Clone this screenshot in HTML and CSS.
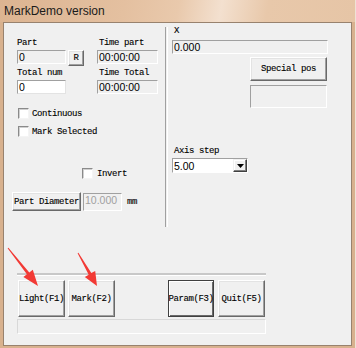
FILE: index.html
```html
<!DOCTYPE html>
<html>
<head>
<meta charset="utf-8">
<link rel="stylesheet" href="styles.css">
</head>
<body>
<div class="window">
  <div class="titlebar"><span class="title">MarkDemo version</span></div>
  <div class="client">
    <div class="top">
      <div class="left">
        <div class="fieldgrid">
          <div class="lbl span2">Part</div>
          <div class="lbl tlbl">Time part</div>
          <div class="edit ro">0</div>
          <div class="btn rbtn">R</div>
          <div class="edit ro time">00:00:00</div>
          <div class="lbl span2">Total num</div>
          <div class="lbl tlbl">Time Total</div>
          <div class="edit">0</div>
          <div></div>
          <div class="edit ro time">00:00:00</div>
        </div>
        <div class="check c1"><span class="box"></span><span class="lbl">Continuous</span></div>
        <div class="check c2"><span class="box"></span><span class="lbl">Mark Selected</span></div>
        <div class="check c3"><span class="box"></span><span class="lbl">Invert</span></div>
        <div class="diam">
          <div class="btn dbtn">Part Diameter</div>
          <div class="edit ro dis">10.000</div>
          <span class="lbl mm">mm</span>
        </div>
      </div>
      <div class="vsep"></div>
      <div class="right">
        <div class="lbl rl">X</div>
        <div class="edit ro xbox">0.000</div>
        <div class="btn spbtn">Special pos</div>
        <div class="static"></div>
        <div class="lbl rl axis">Axis step</div>
        <div class="combo">
          <span class="ctext">5.00</span>
          <span class="dd"><svg width="7" height="4" viewBox="0 0 7 4"><path d="M0 0H7L3.5 4Z" fill="#000"/></svg></span>
        </div>
      </div>
    </div>
    <div class="hsep"></div>
    <div class="btnrow">
      <div class="btn big">Light(F1)</div>
      <div class="btn big mark">Mark(F2)</div>
      <div class="btn big def">Param(F3)</div>
      <div class="btn big quit">Quit(F5)</div>
    </div>
    <div class="status"></div>
  </div>
  <svg class="arrows" width="356" height="348" viewBox="0 0 356 348">
    <polygon points="7.6,248.3 8.4,247.7 29.3,272.5 32.8,269.7 38,286 23.4,277.1 26.9,274.3" fill="#f23a35"/>
    <polygon points="77.6,253.2 78.4,252.8 91.3,273.1 95.2,270.9 97,286 84.8,276.9 88.7,274.7" fill="#f23a35"/>
  </svg>
</div>
</body>
</html>
```

FILE: styles.css
```css
html, body { margin: 0; padding: 0; background: #ffffff; }
.window {
  position: relative;
  width: 356px;
  height: 348px;
  box-sizing: border-box;
  background: #d8b18e;
  border-right: 1px solid #efe2d6;
  overflow: hidden;
}
.titlebar {
  height: 22px;
  display: flex;
  align-items: center;
  padding-left: 4px;
  background: linear-gradient(100deg, #dcb491 0%, #e4c0a0 35%, #e9c9ac 50%, #f3e0cf 62%, #e8c8aa 75%, #e6c5a6 100%);
}
.title {
  font-family: "Liberation Sans", Arial, sans-serif;
  font-size: 12px;
  color: #1a1a1a;
  margin-top: -1px;
}
.client {
  margin-left: 3px;
  width: 349px;
  height: 324px;
  box-sizing: border-box;
  border: 1px solid #98826e;
  background: #f0f0f0;
}
.lbl {
  font-family: "Liberation Mono", monospace;
  font-size: 9px;
  letter-spacing: -0.4px;
  line-height: 10px;
  height: 10px;
  color: #000;
  white-space: nowrap;
  -webkit-text-stroke: 0.12px #000;
}
.top { display: flex; height: 250px; }
.left { width: 161px; padding-left: 13px; box-sizing: border-box; }
.fieldgrid {
  margin-top: 15px;
  display: grid;
  grid-template-columns: 49px 16px 72px;
  column-gap: 2px;
  grid-template-rows: 10px 16px 10px 14px;
  row-gap: 2px;
  align-items: start;
}
.span2 { grid-column: 1 / 3; }
.tlbl { padding-left: 13px; }
.fieldgrid .time { margin-left: 11px; width: 61px; }
.edit {
  height: 14px;
  box-sizing: border-box;
  border: 1px solid;
  border-color: #a0a0a0 #e3e3e3 #e3e3e3 #a0a0a0;
  background: #fff;
  font-family: "Liberation Sans", sans-serif;
  font-size: 10.5px;
  line-height: 12px;
  padding-left: 1px;
  color: #000;
  white-space: nowrap;
  overflow: hidden;
}
.edit.ro { background: #f0f0f0; border-color: #a0a0a0 #ffffff #ffffff #a0a0a0; }
.edit.dis { color: #a0a0a0; }
.btn {
  box-sizing: border-box;
  border: 1px solid;
  border-color: #ffffff #696969 #696969 #ffffff;
  box-shadow: inset -1px -1px 0 #a0a0a0, inset 1px 1px 0 #e3e3e3;
  background: #f0f0f0;
  display: flex;
  align-items: center;
  justify-content: center;
  font-family: "Liberation Mono", monospace;
  font-size: 9px;
  letter-spacing: -0.4px;
  white-space: nowrap;
  overflow: hidden;
  color: #000;
  -webkit-text-stroke: 0.12px #000;
}
.rbtn { width: 16px; height: 16px; }
.check { display: flex; align-items: center; height: 11px; }
.check .box {
  width: 11px; height: 11px; box-sizing: border-box;
  border: 1px solid; border-color: #8a8a8a #f4f4f4 #f4f4f4 #8a8a8a;
  box-shadow: inset 1px 1px 0 #d0d0d0;
  background: #fff;
  margin-right: 3px;
}
.c1 { margin-top: 14px; margin-left: 1px; }
.c2 { margin-top: 7px; margin-left: 1px; }
.c3 { margin-top: 31px; margin-left: 65px; }
.c3 .box { margin-right: 4px; }
.diam { display: flex; align-items: flex-start; margin-top: 13px; margin-left: -5px; }
.dbtn { width: 69px; height: 19px; }
.diam .edit { width: 39px; height: 18px; margin-left: 2px; margin-top: 1px; line-height: 12px; }
.mm { margin-left: 5px; margin-top: 5px; }
.vsep {
  width: 1px; height: 200px; margin-top: 4px;
  border-left: 1px solid #a0a0a0; border-right: 1px solid #ffffff;
}
.right { flex: 1; padding-left: 4px; }
.rl { padding-left: 2px; }
.right > .lbl:first-child { margin-top: 3px; }
.xbox { width: 156px; margin-top: 4px; }
.spbtn { width: 77px; height: 24px; margin-top: 3px; margin-left: 78px; }
.static {
  width: 77px; height: 23px; margin-top: 4px; margin-left: 78px; box-sizing: border-box;
  border: 1px solid; border-color: #a0a0a0 #ffffff #ffffff #a0a0a0;
}
.axis { margin-top: 38px; }
.combo {
  width: 76px; height: 15px; margin-top: 2px; box-sizing: border-box;
  border: 1px solid; border-color: #a0a0a0 #ffffff #ffffff #a0a0a0;
  background: #fff;
  display: flex; align-items: center; justify-content: space-between;
}
.ctext { font-family: "Liberation Sans", sans-serif; font-size: 10.5px; padding-left: 1px; line-height: 12px; }
.dd {
  width: 14px; height: 13px; box-sizing: border-box;
  border: 1px solid; border-color: #f0f0f0 #404040 #404040 #f0f0f0;
  box-shadow: inset -1px -1px 0 #808080, inset 1px 1px 0 #fff;
  background: #f0f0f0;
  display: flex; align-items: center; justify-content: center;
}
.hsep {
  margin-top: 0; margin-left: 13px; width: 249px; height: 2px;
  background: #c8c8c8; border-bottom: 1px solid #ffffff;
}
.btnrow { display: flex; margin-top: 4px; margin-left: 14px; }
.big { width: 47px; height: 37px; }
.mark { margin-left: 3px; }
.def { margin-left: 53px; width: 46px; border-color: #404040; box-shadow: inset 1px 1px 0 #fff, inset -1px -1px 0 #696969; }
.quit { margin-left: 4px; }
.status {
  margin-top: 2px; margin-left: 13px; width: 249px; height: 15px; box-sizing: border-box;
  border: 1px solid; border-color: #d8d8d8 #ffffff #ffffff #d8d8d8;
}
.arrows { position: absolute; left: 0; top: 0; pointer-events: none; }
```
